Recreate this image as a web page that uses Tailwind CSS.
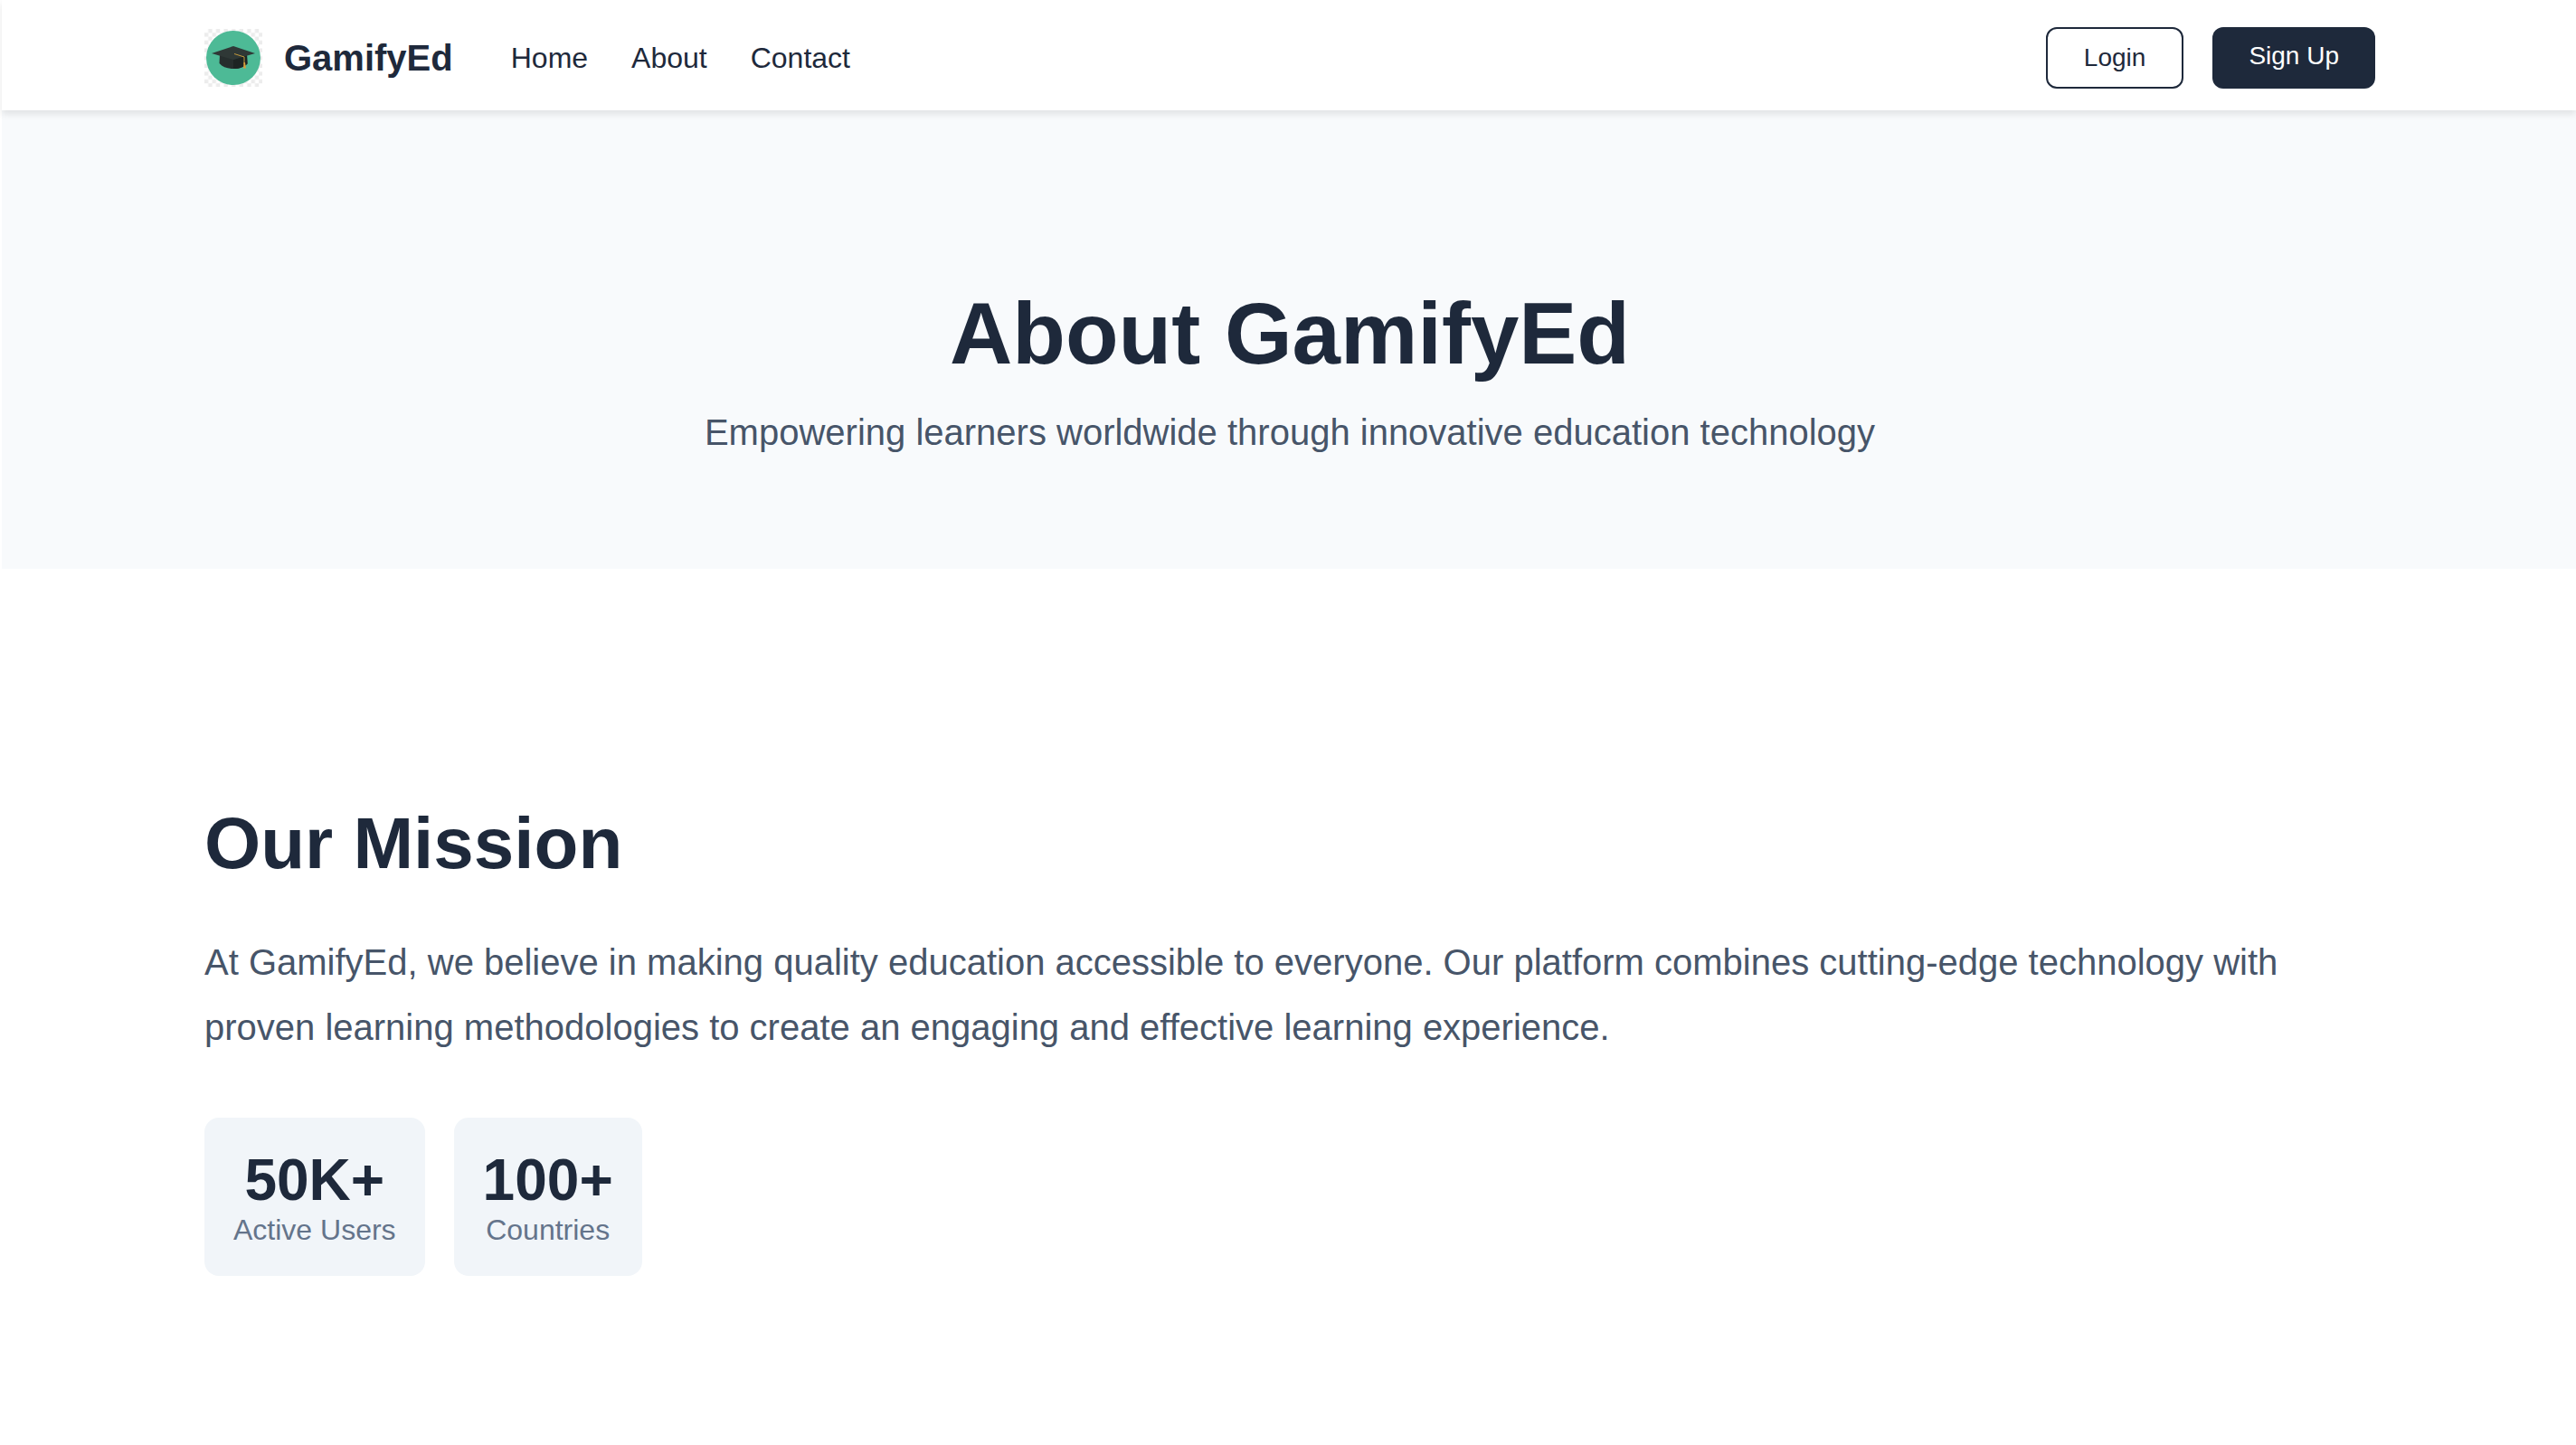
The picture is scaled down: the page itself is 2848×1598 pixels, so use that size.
<!DOCTYPE html>
<html lang="en">
<head>
<meta charset="utf-8">
<title>About GamifyEd</title>
<script src="https://cdn.jsdelivr.net/npm/@tailwindcss/browser@4"></script>
</head>
<body class="min-h-screen bg-white pl-[2px] font-['Liberation_Sans',Arial,sans-serif] text-[#1e293b]">
  <header class="relative bg-white pt-[30px] pb-6 pl-[2px] shadow-[0_4px_8px_rgba(0,0,0,0.1)]">
    <div class="mx-auto flex max-w-[2400px] items-center justify-between">
      <div class="flex items-center gap-16">
        <a href="#" class="flex items-center gap-6">
          <svg class="size-16" viewBox="0 0 64 64" aria-hidden="true">
            <defs>
              <pattern id="checks" width="8.6" height="8.6" patternUnits="userSpaceOnUse">
                <path fill="#fff" d="M0 0h8.6v8.6H0z"/>
                <path fill="#ececec" d="M4.3 0h4.3v4.3H4.3zM0 4.3h4.3v4.3H0z"/>
              </pattern>
            </defs>
            <path fill="url(#checks)" d="M0 0h64v64H0z"/>
            <circle cx="32" cy="32" r="30" fill="#4dba96"/>
            <path fill="#262e2d" d="M17 28l15 5 15-5 .5 10.500C44 42 39 44 32 44S20 42 16.500 38z"/>
            <path fill="#1d2423" d="M32 34l15-5 .5 9.500C44 42 39 44 32 44z"/>
            <path fill="#2f3836" d="M8 27l24-8 24 8-24 7z"/>
            <path fill="none" stroke="#c39a3c" stroke-width="1" d="M33 27.500l11 3.500v8"/>
            <path fill="#d69c3a" d="M43.500 37h1.500l1 6.500h-3z"/>
          </svg>
          <span class="text-[40px] leading-[48px] font-bold">GamifyEd</span>
        </a>
        <nav class="flex gap-12 text-[32px] leading-[36px]">
          <a href="#">Home</a>
          <a href="#">About</a>
          <a href="#">Contact</a>
        </nav>
      </div>
      <div class="flex gap-8 text-[28px] leading-[32px]">
        <button type="button" class="rounded-xl border-2 border-[#1e293b] px-10 py-4">Login</button>
        <button type="button" class="rounded-xl bg-[#1e293b] px-10 pt-4 pb-5 text-white">Sign Up</button>
      </div>
    </div>
  </header>
  <main>
    <section class="bg-[#f8fafc] pt-[170px] pb-[119px] pl-[2px] text-center">
      <h1 class="text-[96px] leading-[154px] font-bold">About GamifyEd</h1>
      <p class="text-[40px] leading-[64px] text-[#475569]">Empowering learners worldwide through innovative education technology</p>
    </section>
    <section class="py-[240px] pl-[2px]">
      <div class="mx-auto max-w-[2400px]">
        <h2 class="text-[80px] leading-[128px] font-bold">Our Mission</h2>
        <p class="mt-[31px] text-[40px] leading-[72px] text-[#475569]">At GamifyEd, we believe in making quality education accessible to everyone. Our platform combines cutting-edge technology with proven learning methodologies to create an engaging and effective learning experience.</p>
        <div class="mt-16 flex gap-8 text-center">
          <div class="rounded-2xl bg-[#f1f5f9] p-8">
            <h3 class="text-[64px] leading-[74px] font-bold">50K+</h3>
            <p class="text-[32px] leading-[37px] text-[#64748b]">Active Users</p>
          </div>
          <div class="rounded-2xl bg-[#f1f5f9] p-8">
            <h3 class="text-[64px] leading-[74px] font-bold">100+</h3>
            <p class="text-[32px] leading-[37px] text-[#64748b]">Countries</p>
          </div>
        </div>
      </div>
    </section>
  </main>
</body>
</html>
